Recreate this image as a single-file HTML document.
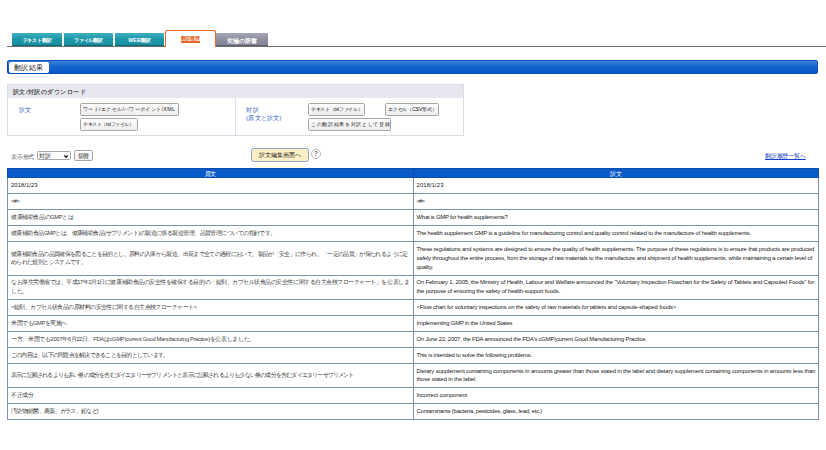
<!DOCTYPE html>
<html lang="ja">
<head>
<meta charset="utf-8">
<title>翻訳結果</title>
<style>
@font-face{font-family:"JP";src:local("Liberation Sans");size-adjust:133.33%;unicode-range:U+3000-30FF,U+4E00-9FFF,U+FF00-FFEF;}
html,body{margin:0;padding:0;background:#fff;}
body{width:826px;height:450px;overflow:hidden;position:relative;font-family:"JP","Liberation Sans",sans-serif;color:#333;}
.abs{position:absolute;white-space:nowrap;}
.tab{position:absolute;top:33px;height:13px;box-sizing:border-box;color:#fff;font-weight:bold;font-size:5.4px;line-height:15px;text-align:center;border-radius:1px 1px 0 0;white-space:nowrap;
 background:linear-gradient(#3fb0c0,#1e98a9 45%,#178e9f);box-shadow:inset 0 -1px 0 #0e6675;}
.tab.gray{background:linear-gradient(#a6a6b8,#8d8da0 55%,#848497);box-shadow:inset 0 -1px 0 #5e5e6c;}
.tab.act{top:30px;height:17px;background:#fff;border:1.5px solid #e4692a;border-bottom:none;border-radius:2.5px 2.5px 0 0;color:#e4692a;line-height:13px;box-shadow:none;z-index:2;}
.tab.act .u{display:inline-block;border-bottom:2px solid #e4692a;line-height:6.5px;padding:0;}
.tab.act .u span{position:relative;top:1px;}
.line{position:absolute;left:7px;top:46px;width:819px;height:1px;background:#6f6f6f;}
.bar{position:absolute;left:7px;top:60px;width:811px;height:14px;box-sizing:border-box;border:1px solid #0a4fbb;border-radius:2px;background:linear-gradient(#3d80d9,#1163cc 50%,#0856c4);}
.bar .lbl{position:absolute;left:1px;top:1px;width:40px;height:11px;box-sizing:border-box;background:#fff;border-radius:2px;font-size:7px;line-height:11px;color:#222;padding-left:5px;white-space:nowrap;}
.dl{position:absolute;left:7px;top:84px;width:457px;height:52px;box-sizing:border-box;border:1px solid #dcdce8;}
.dl .hd{position:absolute;left:0;top:0;right:0;height:13px;background:#e7e7ef;font-size:6px;font-weight:bold;line-height:14px;padding-left:5px;color:#555;white-space:nowrap;}
.dl .sep{position:absolute;left:227px;top:13px;width:1px;bottom:0;background:#e3e3ed;}
.blue{color:#1f55c8;font-size:6px;line-height:9px;}
.btn{position:absolute;box-sizing:border-box;height:12.5px;border:1px solid #a6a6a6;border-radius:1.5px;background:linear-gradient(#fdfdfd,#eeeeee);font-size:5.4px;line-height:10.5px;color:#222;padding-left:2px;white-space:nowrap;overflow:hidden;}
.sm{font-size:5.8px;color:#666;}
.tbl{position:absolute;left:7px;top:168px;width:811px;border-collapse:collapse;table-layout:fixed;}
.tbl td{border:1px solid #7f8fb5;font-size:5.8px;line-height:8.75px;padding:3.125px 3px;vertical-align:middle;color:#444;white-space:nowrap;overflow:hidden;}
.tbl td.e{font-size:5.9px;color:#222;}
.tbl td+td{padding-left:2.5px;}
.tbl th{background:#0a5bc8;color:#fff;font-weight:normal;font-size:6px;height:8px;line-height:8px;padding:0;border:1px solid #0a4fb0;}
.tbl th span{position:relative;top:1px;}
</style>
</head>
<body>
<div class="tab" style="left:12px;width:50px;"><span id="k_tab1" style="letter-spacing:-0.202px">テキスト翻訳</span></div>
<div class="tab" style="left:64px;width:49px;"><span id="k_tab2" style="letter-spacing:-0.202px">ファイル翻訳</span></div>
<div class="tab" style="left:115px;width:49px;"><span id="k_tab3" style="letter-spacing:0.002px">WEB翻訳</span></div>
<div class="tab act" style="left:165px;width:51px;"><span class="u"><span id="k_tab4" style="letter-spacing:-0.102px">翻訳履歴</span></span></div>
<div class="tab gray" style="left:216px;width:52px;font-size:5.8px;line-height:16px;"><span id="k_tab5" style="letter-spacing:-0.102px">究極の辞書</span></div>
<div class="line"></div>

<div class="bar"><div class="lbl"><span id="k_lbl" style="letter-spacing:0.466px">翻訳結果</span></div></div>

<div class="dl">
 <div class="hd"><span id="k_hd" style="letter-spacing:0.447px">訳文/対訳のダウンロード</span></div>
 <div class="sep"></div>
</div>
<div class="abs blue" style="left:19px;top:105.5px;"><span id="k_b1" style="letter-spacing:0.288px">訳文</span></div>
<div class="btn" style="left:80px;top:103px;width:99px;"><span id="k_btn1" style="letter-spacing:0.337px">ワード/エクセル/パワーポイント/XML</span></div>
<div class="btn" style="left:80px;top:118px;width:58px;"><span id="k_btn2" style="letter-spacing:-0.392px">テキスト（txtファイル）</span></div>
<div class="abs blue" style="left:246px;top:105.5px;line-height:8.5px;"><span id="k_b2" style="letter-spacing:1.000px">対訳</span><br><span id="k_b3" style="letter-spacing:0.266px">(原文と訳文)</span></div>
<div class="btn" style="left:308px;top:103px;width:57px;"><span id="k_btn3" style="letter-spacing:-0.334px">テキスト（txtファイル）</span></div>
<div class="btn" style="left:385px;top:103px;width:54px;"><span id="k_btn4" style="letter-spacing:-0.219px">エクセル（CSV形式）</span></div>
<div class="btn" style="left:308px;top:118px;width:83px;"><span id="k_btn5" style="letter-spacing:0.677px">この翻訳結果を対訳として登録</span></div>

<div class="abs sm" style="left:11px;top:152.5px;line-height:8px;"><span id="k_disp" style="letter-spacing:-0.170px">表示形式</span></div>
<div class="abs" style="left:37px;top:151px;width:34px;height:9px;box-sizing:border-box;border:1px solid #a8a8a8;border-radius:1.5px;font-size:5.8px;line-height:8.5px;padding-left:1px;color:#222;"><span id="k_sel" style="letter-spacing:-0.500px">対訳</span><svg style="position:absolute;left:26px;top:2.5px" width="4" height="3" viewBox="0 0 4 3"><path d="M0.3 0.4 L2 2.3 L3.7 0.4" fill="none" stroke="#111" stroke-width="1.3"/></svg></div>
<div class="btn" style="left:74px;top:150px;width:19px;height:11px;line-height:11px;text-align:center;padding:0;font-size:5.8px;"><span id="k_kiri" style="letter-spacing:-0.606px">切替</span></div>
<div class="btn" style="left:251px;top:148px;width:58px;height:14px;line-height:13px;text-align:center;padding:0;background:#fdf0c6;border:1.5px solid #8ea6cf;border-radius:2.5px;font-size:5.8px;"><span id="k_yel" style="letter-spacing:-0.052px">訳文編集画面へ</span></div>
<div class="abs" style="left:310.5px;top:148.5px;width:10.5px;height:10.5px;box-sizing:border-box;border:1px solid #bbb;border-radius:50%;font-size:7.5px;font-weight:bold;line-height:8.5px;text-align:center;color:#808080;">?</div>
<div class="abs" style="left:765px;top:151.5px;font-size:5.8px;line-height:8px;color:#1a3fcf;text-decoration:underline;"><span id="k_link" style="letter-spacing:-0.184px">翻訳履歴一覧へ</span></div>

<table class="tbl">
<colgroup><col style="width:406px"><col style="width:405px"></colgroup>
<tr><th><span id="k_th1" style="letter-spacing:-0.409px">原文</span></th><th><span id="k_th2" style="letter-spacing:-0.409px">訳文</span></th></tr>
<tr><td class="e" style="letter-spacing:0.037px">2018/1/23</td><td class="e" style="letter-spacing:0.099px">2018/1/23</td></tr>
<tr><td class="e" style="letter-spacing:-0.580px">&lt;#&gt;</td><td class="e" style="letter-spacing:-0.830px">&lt;#&gt;</td></tr>
<tr><td style="letter-spacing:-0.402px">健康補助食品のGMPとは</td><td class="e" style="letter-spacing:-0.230px">What is GMP for health supplements?</td></tr>
<tr><td style="letter-spacing:-0.555px">健康補助食品GMPとは、健康補助食品(サプリメント)の製造に係る製造管理、品質管理についての指針です。</td><td class="e" style="letter-spacing:-0.176px">The health supplement GMP is a guideline for manufacturing control and quality control related to the manufacture of health supplements.</td></tr>
<tr><td style="letter-spacing:-0.640px">健康補助食品の品質確保を図ることを目的とし、原料の入庫から製造、出荷まで全ての過程において、製品が「安全」に作られ、「一定の品質」が保たれるように定<br>められた規則とシステムです。</td><td class="e" style="letter-spacing:-0.168px">These regulations and systems are designed to ensure the quality of health supplements. The purpose of these regulations is to ensure that products are produced<br>safely throughout the entire process, from the storage of raw materials to the manufacture and shipment of health supplements, while maintaining a certain level of<br>quality.</td></tr>
<tr><td style="padding-top:2.75px;padding-bottom:2.75px;letter-spacing:-0.470px">なお厚生労働省では、平成17年2月1日に健康補助食品の安全性を確保する目的の「錠剤、カプセル状食品の安全性に関する自主点検フローチャート」を公表しま<br>した。</td><td class="e" style="padding-top:2.75px;padding-bottom:2.75px;letter-spacing:-0.156px">On February 1, 2005, the Ministry of Health, Labour and Welfare announced the "Voluntary Inspection Flowchart for the Safety of Tablets and Capsuled Foods" for<br>the purpose of ensuring the safety of health-support foods.</td></tr>
<tr><td style="letter-spacing:-0.552px">&lt;錠剤、カプセル状食品の原材料の安全性に関する自主点検フローチャート&gt;</td><td class="e" style="letter-spacing:-0.155px">&lt;Flow chart for voluntary inspections on the safety of raw materials for tablets and capsule-shaped foods&gt;</td></tr>
<tr><td style="letter-spacing:-0.482px">米国でもGMPを実施へ</td><td class="e" style="letter-spacing:-0.205px">Implementing GMP in the United States</td></tr>
<tr><td style="letter-spacing:-0.351px">一方、米国でも2007年6月22日、FDAはcGMP(current Good Manufacturing Practice)を公表しました。</td><td class="e" style="letter-spacing:-0.197px">On June 22, 2007, the FDA announced the FDA's cGMP(current Good Manufacturing Practice.</td></tr>
<tr><td style="letter-spacing:-0.758px">この内容は、以下の問題点を解決できることを目的としています。</td><td class="e" style="letter-spacing:-0.197px">This is intended to solve the following problems.</td></tr>
<tr><td style="letter-spacing:-0.808px">表示に記載されるよりも多い量の成分を含むダイエタリーサプリメントと表示に記載されるよりも少ない量の成分を含むダイエタリーサプリメント</td><td class="e" style="letter-spacing:-0.146px">Dietary supplement containing components in amounts greater than those stated in the label and dietary supplement containing components in amounts less than<br>those stated in the label</td></tr>
<tr><td style="letter-spacing:-0.268px">不正成分</td><td class="e" style="letter-spacing:-0.167px">Incorrect component</td></tr>
<tr><td style="letter-spacing:-0.710px">汚染物(細菌、農薬、ガラス、鉛など)</td><td class="e" style="letter-spacing:-0.202px">Contaminants (bacteria, pesticides, glass, lead, etc.)</td></tr>
</table>
</body>
</html>
